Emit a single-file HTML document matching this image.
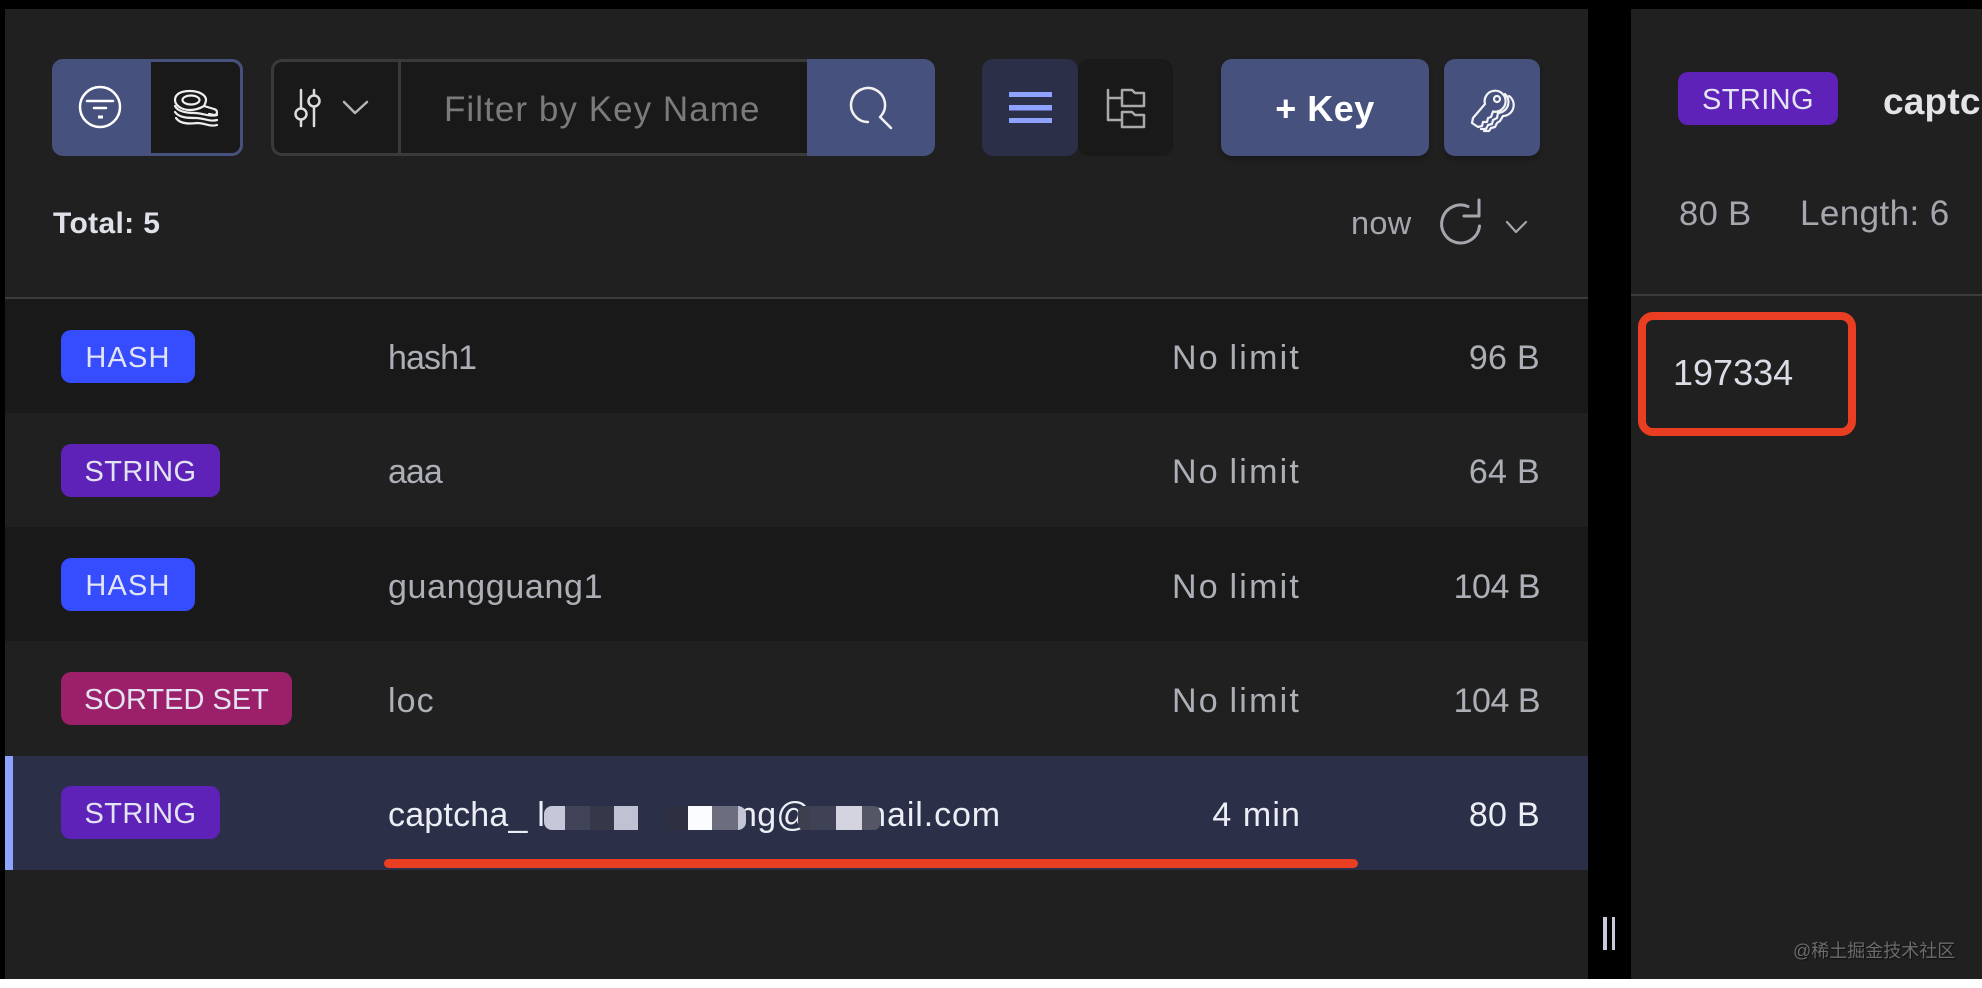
<!DOCTYPE html>
<html lang="en">
<head>
<meta charset="utf-8">
<title>Redis keys</title>
<style>
html,body{margin:0;padding:0;background:#fff;}
body{position:relative;width:1982px;height:988px;overflow:hidden;font-family:"Liberation Sans","Noto Sans CJK SC",sans-serif;}
div{position:absolute;box-sizing:border-box;}
.t{white-space:nowrap;line-height:44px;height:44px;}
.r{text-align:right;}
.cell{font-size:34px;color:#adafb6;letter-spacing:.3px;}
.nl{letter-spacing:2.2px;word-spacing:-2px;margin-right:-2px;}
.badge{left:61px;height:53px;border-radius:10px;color:#e2e4f2;font-size:29px;display:flex;align-items:center;justify-content:center;padding-top:3px;}
.str{width:159px;background:#5f22b8;letter-spacing:.4px;}
.hash{width:134px;background:#364cff;letter-spacing:1.2px;}
.sort{width:231px;background:#9c1f6a;}
.row{left:5px;width:1583px;height:114px;}
svg{position:absolute;left:0;top:0;}
</style>
</head>
<body>
<div style="left:0;top:0;width:1982px;height:979px;background:#000"></div>
<div style="left:5px;top:9px;width:1583px;height:970px;background:#202020"></div>
<div style="left:1631px;top:9px;width:351px;height:970px;background:#202020;overflow:hidden"></div>

<!-- toolbar -->
<div style="left:52px;top:59px;width:191px;height:97px;border:3px solid #47517e;border-radius:11px;background:#191919;overflow:hidden">
  <div style="left:-3px;top:-3px;width:99px;height:97px;background:#47517e"></div>
</div>
<div style="left:271px;top:59px;width:540px;height:97px;border:3px solid #3a3a3a;border-right:0;border-radius:11px 0 0 11px;background:#191919"></div>
<div style="left:398px;top:60px;width:3px;height:95px;background:#3a3a3a"></div>
<div class="t" style="left:444px;top:88px;font-size:35px;color:#7b7b7d;letter-spacing:1.05px">Filter by Key Name</div>
<div style="left:807px;top:59px;width:128px;height:97px;background:#47517e;border-radius:0 11px 11px 0"></div>
<div style="left:982px;top:59px;width:96px;height:97px;background:#2b2f47;border-radius:11px"></div>
<div style="left:1078px;top:59px;width:95px;height:97px;background:#191919;border-radius:11px"></div>
<div style="left:1221px;top:59px;width:208px;height:97px;background:#47517e;border-radius:11px;box-shadow:0 3px 6px rgba(0,0,0,.25)"></div>
<div class="t" style="left:1221px;width:208px;top:87px;text-align:center;font-size:36px;font-weight:bold;color:#fff;letter-spacing:.5px">+ Key</div>
<div style="left:1444px;top:59px;width:96px;height:97px;background:#47517e;border-radius:11px;box-shadow:0 3px 6px rgba(0,0,0,.25)"></div>

<div class="t" style="left:53px;top:202px;font-size:30px;font-weight:bold;color:#dfe1e9;letter-spacing:.35px">Total: 5</div>
<div class="t" style="left:1351px;top:201px;font-size:32.5px;color:#a5a6ae;letter-spacing:.3px">now</div>

<div style="left:5px;top:297px;width:1583px;height:2px;background:#3c3c3c"></div>

<!-- rows -->
<div class="row" style="top:299px;background:#191919"></div>
<div class="row" style="top:527px;background:#191919"></div>
<div class="row" style="top:756px;background:#2b2f48"></div>
<div style="left:5px;top:756px;width:8px;height:114px;background:#8ea2ff"></div>

<div class="badge hash" style="top:330px">HASH</div>
<div class="badge str" style="top:444px">STRING</div>
<div class="badge hash" style="top:558px">HASH</div>
<div class="badge sort" style="top:672px">SORTED SET</div>
<div class="badge str" style="top:786px">STRING</div>

<div class="t cell" style="left:388px;top:336px;letter-spacing:-.9px">hash1</div>
<div class="t cell" style="left:388px;top:450px;letter-spacing:-1px">aaa</div>
<div class="t cell" style="left:388px;top:565px;letter-spacing:.65px">guangguang1</div>
<div class="t cell" style="left:388px;top:679px;letter-spacing:1.1px">loc</div>
<div class="t cell" style="left:388px;top:793px;color:#eceef6;letter-spacing:.2px">captcha_ l</div>
<div class="t cell" style="left:738px;top:793px;color:#eceef6">ng@</div>
<div class="t cell r" style="left:801px;width:200px;top:793px;color:#eceef6;letter-spacing:.9px">mail.com</div>

<div class="t cell r nl" style="left:1100px;width:201px;top:336px">No limit</div>
<div class="t cell r nl" style="left:1100px;width:201px;top:450px">No limit</div>
<div class="t cell r nl" style="left:1100px;width:201px;top:565px">No limit</div>
<div class="t cell r nl" style="left:1100px;width:201px;top:679px">No limit</div>
<div class="t cell r" style="left:1100px;width:201px;top:793px;color:#eceef6;letter-spacing:1.1px">4 min</div>

<div class="t cell r" style="left:1340px;width:200px;top:336px">96 B</div>
<div class="t cell r" style="left:1340px;width:200px;top:450px">64 B</div>
<div class="t cell r" style="left:1340px;width:200px;top:565px;letter-spacing:-.5px">104 B</div>
<div class="t cell r" style="left:1340px;width:200px;top:679px;letter-spacing:-.5px">104 B</div>
<div class="t cell r" style="left:1340px;width:200px;top:793px;color:#eceef6">80 B</div>

<!-- mosaic -->
<div style="left:544px;top:806px;width:21px;height:24px;background:#c6c8d9;border-radius:8px 0 0 8px"></div>
<div style="left:565px;top:806px;width:25px;height:24px;background:#414358"></div>
<div style="left:590px;top:806px;width:24px;height:24px;background:#37374a"></div>
<div style="left:614px;top:806px;width:24px;height:24px;background:#c0c2d4"></div>
<div style="left:638px;top:806px;width:27px;height:24px;background:#2b2f48"></div>
<div style="left:665px;top:806px;width:23px;height:24px;background:#2f2f42"></div>
<div style="left:688px;top:806px;width:24px;height:24px;background:#fafcff"></div>
<div style="left:712px;top:806px;width:26px;height:24px;background:#6c6e80"></div>
<div style="left:738px;top:806px;width:8px;height:24px;background:#c4c5d4;border-radius:0 8px 8px 0"></div>
<div style="left:798px;top:806px;width:12px;height:24px;background:#3e3f4e;border-radius:6px 0 0 6px"></div>
<div style="left:810px;top:806px;width:26px;height:24px;background:#3f4155"></div>
<div style="left:836px;top:806px;width:26px;height:24px;background:#d4d4e0"></div>
<div style="left:862px;top:806px;width:18px;height:24px;background:#545666;border-radius:0 6px 6px 0"></div>

<div style="left:384px;top:859px;width:974px;height:9px;background:#e93e22;border-radius:5px"></div>

<!-- right panel -->
<div class="badge str" style="left:1678px;top:72px;width:160px">STRING</div>
<div class="t" style="left:1883px;top:80px;width:99px;overflow:hidden;font-size:37px;font-weight:bold;color:#e4e4e8;letter-spacing:.2px">captcha_</div>
<div class="t" style="left:1679px;top:192px;font-size:34.5px;color:#a5a6ae;letter-spacing:.4px">80 B</div>
<div class="t" style="left:1800px;top:192px;font-size:35px;color:#a5a6ae;letter-spacing:.4px">Length: 6</div>
<div style="left:1631px;top:294px;width:351px;height:2px;background:#3c3c3c"></div>
<div style="left:1638px;top:312px;width:218px;height:124px;border:8px solid #e93e22;border-radius:15px"></div>
<div class="t" style="left:1673px;top:351px;font-size:36px;color:#dadce6">197334</div>

<!-- handle -->
<div style="left:1603px;top:917px;width:4px;height:33px;background:#c8cbdc"></div>
<div style="left:1612px;top:917px;width:3px;height:33px;background:#c8cbdc"></div>

<!-- watermark -->
<div class="t" style="left:1793px;top:929px;font-size:18px;color:#6b6b6b;text-shadow:1px 1px 1px #111">@稀土掘金技术社区</div>

<svg width="1982" height="988" viewBox="0 0 1982 988" fill="none" stroke-linecap="round" stroke-linejoin="round">
  <!-- filter -->
  <g stroke="#fff" stroke-width="2.5">
    <circle cx="100" cy="107" r="20"/>
    <path d="M87 101H113M94 108H106"/>
  </g>
  <rect x="98" y="115.500" width="5" height="3" fill="#fff"/>
  <!-- stack search -->
  <g stroke="#efefef" stroke-width="2.200">
    <path d="M204 106C199 109 195 110 190 110C181 110 175 105 175 100C175 94 181 91 190 91C199 91 206 95 206 100C206 102 205 104 204 106L214 109C218 110 218 115 214 115L209 114"/>
    <ellipse cx="191" cy="100" rx="8.500" ry="4.500"/>
    <path d="M175 106C178 112 188 113 195 113C203 113 208 117 217 115"/>
    <path d="M175 112C179 118 189 118 196 118C204 118 209 122 217 120"/>
    <path d="M176 118C180 124 190 124 197 123C205 123 210 127 217 125"/>
  </g>
  <!-- sliders -->
  <g stroke="#dcdcdc" stroke-width="2.500">
    <path d="M301 90V126M314 90V126"/>
    <circle cx="301" cy="114" r="5.500" fill="#191919"/>
    <circle cx="314" cy="101" r="5.500" fill="#191919"/>
  </g>
  <path d="M344 102L355 113L367 102" stroke="#b5b5b5" stroke-width="2.500"/>
  <!-- search -->
  <path d="M868 122A17 17 0 1 1 881 116M880 117L891 128" stroke="#f2f2f2" stroke-width="2.500"/>
  <!-- list -->
  <g fill="#8ea2ff">
    <rect x="1009" y="92" width="43" height="5"/>
    <rect x="1009" y="105" width="43" height="5.500"/>
    <rect x="1009" y="118" width="43" height="5"/>
  </g>
  <!-- tree -->
  <g stroke="#a9a9a9" stroke-width="2.500">
    <path d="M1108 90V120H1121M1108 98H1121"/>
    <path d="M1122 106V90H1132L1135 93H1144V106Z"/>
    <path d="M1122 127V112H1132L1135 115H1144V127Z"/>
  </g>
  <!-- keys -->
  <g stroke="#f4f4f8" stroke-width="2.200">
    <path d="M1485 104L1473 118L1472 123L1478 127L1482 126L1483 122L1487 122L1488 118L1491 117L1493 111.500A10.500 10.500 0 1 0 1485 104Z"/>
    <circle cx="1497" cy="99" r="3"/>
    <path d="M1505 94A11 11 0 0 1 1498 113L1497 118L1493 120L1492 124L1488 125L1486 129L1481 129"/>
    <path d="M1509 96A11 11 0 0 1 1503 116L1500 121L1497 123L1495 127L1491 128L1489 131L1484 131"/>
  </g>
  <!-- refresh -->
  <path d="M1468 206.500A19 19 0 1 0 1479.500 226M1479 200V216H1464" stroke="#a5a6ae" stroke-width="3"/>
  <path d="M1507 222L1516 232L1526 222" stroke="#a5a6ae" stroke-width="2.200"/>
</svg>
</body>
</html>
